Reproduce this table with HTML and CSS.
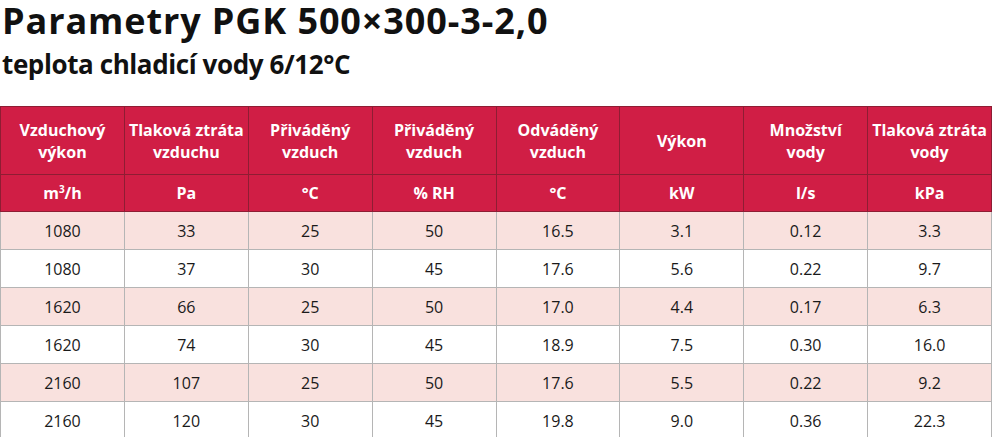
FILE: index.html
```html
<!DOCTYPE html>
<html lang="cs">
<head>
<meta charset="utf-8">
<title>Parametry PGK 500×300-3-2,0</title>
<link rel="stylesheet" href="styles.css">
</head>
<body>
<header class="head">
  <h1 class="title">Parametry PGK 500×300-3-2,0</h1>
  <h2 class="subtitle">teplota chladicí vody 6/12°C</h2>
</header>
<table class="params">
  <thead>
    <tr class="hrow-names">
      <th>Vzduchový<br>výkon</th>
      <th>Tlaková ztráta<br>vzduchu</th>
      <th>Přiváděný<br>vzduch</th>
      <th>Přiváděný<br>vzduch</th>
      <th>Odváděný<br>vzduch</th>
      <th>Výkon</th>
      <th>Množství<br>vody</th>
      <th>Tlaková ztráta<br>vody</th>
    </tr>
    <tr class="hrow-units">
      <th>m<sup>3</sup>/h</th>
      <th>Pa</th>
      <th>°C</th>
      <th>% RH</th>
      <th>°C</th>
      <th>kW</th>
      <th>l/s</th>
      <th>kPa</th>
    </tr>
  </thead>
  <tbody>
    <tr class="odd"><td>1080</td><td>33</td><td>25</td><td>50</td><td>16.5</td><td>3.1</td><td>0.12</td><td>3.3</td></tr>
    <tr><td>1080</td><td>37</td><td>30</td><td>45</td><td>17.6</td><td>5.6</td><td>0.22</td><td>9.7</td></tr>
    <tr class="odd"><td>1620</td><td>66</td><td>25</td><td>50</td><td>17.0</td><td>4.4</td><td>0.17</td><td>6.3</td></tr>
    <tr><td>1620</td><td>74</td><td>30</td><td>45</td><td>18.9</td><td>7.5</td><td>0.30</td><td>16.0</td></tr>
    <tr class="odd"><td>2160</td><td>107</td><td>25</td><td>50</td><td>17.6</td><td>5.5</td><td>0.22</td><td>9.2</td></tr>
    <tr><td>2160</td><td>120</td><td>30</td><td>45</td><td>19.8</td><td>9.0</td><td>0.36</td><td>22.3</td></tr>
  </tbody>
</table>
</body>
</html>
```
FILE: styles.css
```css
html, body {
  margin: 0;
  padding: 0;
  background: #fff;
}
body {
  font-family: "Open Sans", "Noto Sans", sans-serif;
  color: #111;
  width: 992px;
}
.head {
  padding: 0 0 0 2px;
  height: 106px;
}
.title {
  margin: 0;
  font-size: 36px;
  font-weight: 700;
  line-height: 42px;
  letter-spacing: 0.9px;
  color: #111;
}
.subtitle {
  margin: 6px 0 0 0;
  font-size: 26px;
  font-weight: 700;
  line-height: 32px;
  letter-spacing: -0.4px;
  color: #111;
}
.params {
  width: 992px;
  border-collapse: collapse;
  table-layout: fixed;
}
.params th {
  background: #d01e45;
  color: #fff;
  font-weight: 700;
  font-size: 16px;
  border: 1px solid #8e1d33;
  text-align: center;
  padding: 0;
}
.hrow-names th {
  height: 67px;
  line-height: 22px;
}
.hrow-units th {
  height: 36px;
  line-height: 20px;
}
.params th sup {
  font-size: 10px;
  line-height: 0;
  vertical-align: 6px;
}
.params td {
  height: 37px;
  text-align: center;
  font-size: 16px;
  border: 1px solid #b5b5b5;
  padding: 0;
  color: #1a1a1a;
}
.params tr.odd td {
  background: #f9e1de;
}
```
